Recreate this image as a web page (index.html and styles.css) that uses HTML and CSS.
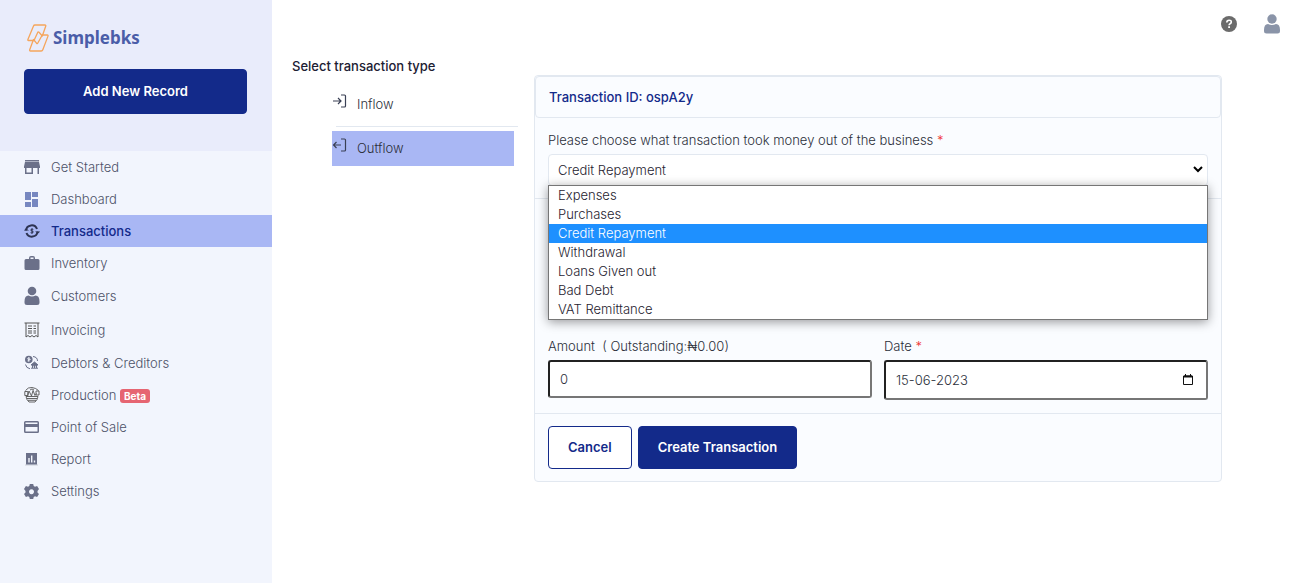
FILE: index.html
```
<!DOCTYPE html>
<html lang="en">
<head>
  <meta charset="utf-8">
  <title>Simplebks - Transactions</title>
  <link rel="stylesheet" href="styles.css">
</head>
<body>
  <aside class="sidebar">
    <div class="sidebar-top">
      <a class="logo" href="#">
        <svg width="22" height="28" viewBox="0 0 22 28" fill="none" stroke="#f5a55c" stroke-width="1.300" stroke-linejoin="round" stroke-linecap="round">
          <path d="M6.500 2q.4-1 1.400-1h10q1.200 0 .8 1.200L15.300 12l-3.300-3.800q-.8-.8-1.300.2L7 16.500H1.500q-1 0-.6-1z"/>
          <path d="M15.300 11h5q1.100 0 .7 1.100l-5.200 13.700q-.4 1.200-1.500 1.200H3.500q-1.200 0-.8-1.200L6.500 15.500l3 3.700q.8.800 1.300-.2z"/>
        </svg>
        <span>Simplebks</span>
      </a>
      <button class="btn btn-primary btn-block">Add New Record</button>
    </div>
    <nav class="nav">
      <a class="nav-link" href="#">
        <svg class="icon" viewBox="0 0 16 20" fill="currentColor"><path d="M1 3h14v1.500H1zM1 5h14l1 4.500V11h-1v6h-1.500v-6H9v6H1v-6H0V9.500zM2.500 11v4.500h5V11z"/></svg>
        Get Started
      </a>
      <a class="nav-link" href="#">
        <svg class="icon icon-blue" viewBox="0 0 16 20" fill="currentColor"><path d="M1 3h6v8H1zM8 3h6v5H8zM1 13h6v5H1zM8 10h6v8H8z"/></svg>
        Dashboard
      </a>
      <a class="nav-link active" href="#">
        <svg class="icon" viewBox="0 0 16 20" fill="none" stroke="currentColor"><g stroke-width="2"><path d="M2 9.500a5.700 5.700 0 0 1 11-1.500M13.500 10.500a5.700 5.700 0 0 1-11 1.500"/></g><path d="M-.3 9.500L2 7.500l3 2zM16.300 10.500L14 12.500l-3-2z" fill="currentColor" stroke="none"/><path d="M9.300 8.500Q8 7.600 7 8.500t1 1.500 1 1.500-2.400.2M8 7.300v5.400"/></svg>
        Transactions
      </a>
      <a class="nav-link" href="#">
        <svg class="icon" viewBox="0 0 16 20" fill="currentColor"><path d="M5 6V5q0-2 2-2h2q2 0 2 2v1h3q1.500 0 1.500 1.500v8q0 1.500-1.500 1.500H2Q.5 17 .5 15.500v-8Q.5 6 2 6zm1.500 0h3V4.500h-3z"/></svg>
        Inventory
      </a>
      <a class="nav-link" href="#">
        <svg class="icon icon-tall" viewBox="0 0 16 22" fill="currentColor"><circle cx="8" cy="6" r="4.300"/><path d="M.5 16.500q0-6 4-6 3.500 1.800 7 0 4 0 4 6v1q0 2.500-2.500 2.500H3q-2.500 0-2.500-2.500z"/></svg>
        Customers
      </a>
      <a class="nav-link" href="#">
        <svg class="icon icon-mid icon-dark" viewBox="0 0 16 21" fill="none" stroke="currentColor"><path d="M.5 4h15M2 4v14l2-1.500 2 1.500 2-1.500 2 1.500 2-1.500 2 1.500V4M4 7h4M9.500 7h2.500M4 9.500h4M9.500 9.500h2.500M4 12h4M9.500 12h2.500M4 14h4M9.500 14h2.500"/></svg>
        Invoicing
      </a>
      <a class="nav-link" href="#">
        <svg class="icon icon-mid" viewBox="0 0 16 21" fill="none" stroke="currentColor"><circle cx="4.800" cy="7.500" r="3.800" fill="currentColor" stroke="none"/><path d="M6 6.300q-2.500-.8-2.400.4t2.200.8-2.300 1.400M4.800 5v5" stroke="#f2f5fd" stroke-width=".8"/><path d="M9 4.500q4.500.5 4.500 4.500M1.500 12.500q.5 3.500 4.500 4.300"/><path d="M7 13l3.500-3 3.500 3zM8 13.800h5M7 16.200h7M8.500 13v3M10.500 13v3M12.500 13v3" fill="currentColor"/></svg>
        Debtors &amp; Creditors
      </a>
      <a class="nav-link" href="#">
        <svg class="icon icon-dark" viewBox="0 0 16 20" fill="none" stroke="currentColor" stroke-width=".9"><path d="M1.500 5.500Q4 2 8 2.500t6.500 3M.8 6.500h3v4h-3zM12 6h3v4h-3zM3.500 11.500L5 6l2.500 5L9 5.500l2 5 1.500-2M2 11.500h12q-.5 3.500-3 5.500H5q-2.500-2-3-5.500zM3 13.500h10M4 15.300h8M6 5q2-2 4 0"/></svg>
        <span>Production <span class="badge">Beta</span></span>
      </a>
      <a class="nav-link" href="#">
        <svg class="icon" viewBox="0 0 16 20" fill="currentColor"><path fill-rule="evenodd" d="M1.500 4h12q1.500 0 1.500 1.500v9q0 1.500-1.500 1.500h-12Q0 16 0 14.500v-9Q0 4 1.500 4zm0 1.500V7h12V5.500zm0 4.500v4.500h12V10z"/></svg>
        Point of Sale
      </a>
      <a class="nav-link" href="#">
        <svg class="icon" viewBox="0 0 16 20"><path fill="#dfe2ea" d="M1 15h13v2H1z"/><path fill="currentColor" fill-rule="evenodd" d="M2 4h11v11.500H2zm2.300 5v4.500h1.400V9zm2.700-2.500v7h1.400v-7zm2.800 5v2h1.400v-2z"/></svg>
        Report
      </a>
      <a class="nav-link" href="#">
        <svg class="icon" viewBox="0 0 16 20" fill="currentColor"><path fill-rule="evenodd" d="M5.800 3h3.400l.5 2 1.300.8 2.100-.7 1.900 3L13.500 10v1.500l1.500 1.400-1.900 3-2.100-.6-1.300.8-.5 2H5.800l-.5-2-1.300-.8-2.100.6-1.900-3 1.500-1.400V10L0 8.100l1.900-3 2.100.7L5.300 5zM7.500 8.200a2.500 2.500 0 1 0 .01 0z"/></svg>
        Settings
      </a>
    </nav>
  </aside>

  <div class="page">
    <header class="topbar">
      <a href="#" aria-label="Help">
        <svg width="16" height="16" viewBox="0 0 16 16"><circle cx="8" cy="8" r="8" fill="#6b6b6b"/><path d="M5.800 6.500q0-2.300 2.300-2.300t2.200 1.900q0 1.100-1.200 1.700-1 .5-1 1.400" fill="none" stroke="#fff" stroke-width="1.600"/><path d="M7.200 10.300h1.800V12H7.200z" fill="#fff"/></svg>
      </a>
      <a href="#" aria-label="Account">
        <svg width="16" height="20" viewBox="0 0 16 20" fill="#8a94a8"><circle cx="8" cy="5" r="4.700"/><path d="M0 16q0-6 4-6 4 2 8 0 4 0 4 6v1q0 2.500-2.500 2.500h-11Q0 19.500 0 17z"/></svg>
      </a>
    </header>

    <main class="content">
      <section class="types">
        <h2>Select transaction type</h2>
        <a class="type" href="#">
          <svg width="15" height="14" viewBox="0 0 15 14" fill="none" stroke="#3a4055" stroke-width="1.200"><path d="M1 7h8M6 4l3 3-3 3M9 1h3.500q1 0 1 1v10q0 1-1 1H9"/></svg>
          Inflow
        </a>
        <hr>
        <a class="type selected" href="#">
          <svg width="15" height="14" viewBox="0 0 15 14" fill="none" stroke="#3a4055" stroke-width="1.200"><path d="M1.500 7H9M4.500 4l-3 3 3 3M9 1h3.500q1 0 1 1v10q0 1-1 1H9"/></svg>
          Outflow
        </a>
      </section>

      <form class="card" onsubmit="return false">
        <div class="card-header">Transaction ID: ospA2y</div>
        <div class="card-section">
          <label for="category">Please choose what transaction took money out of the business <span class="required">*</span></label>
          <div class="select-wrap">
            <select id="category">
              <option>Expenses</option>
              <option>Purchases</option>
              <option selected>Credit Repayment</option>
              <option>Withdrawal</option>
              <option>Loans Given out</option>
              <option>Bad Debt</option>
              <option>VAT Remittance</option>
            </select>
            <svg class="chevron" width="10" height="7" viewBox="0 0 10 7" fill="none" stroke="#000" stroke-width="2"><path d="M1 1l4 4 4-4"/></svg>
            <ul class="options" id="options">
              <li>Expenses</li>
              <li>Purchases</li>
              <li class="current">Credit Repayment</li>
              <li>Withdrawal</li>
              <li>Loans Given out</li>
              <li>Bad Debt</li>
              <li>VAT Remittance</li>
            </ul>
          </div>
        </div>
        <div class="card-section details">
          <div class="field">
            <label for="amount">Amount &nbsp;( Outstanding:₦0.00)</label>
            <input type="text" id="amount" value="0">
          </div>
          <div class="field">
            <label for="date">Date <span class="required">*</span></label>
            <div class="date-wrap">
              <input type="text" id="date" class="date" value="15-06-2023">
              <svg class="calendar" width="10" height="11" viewBox="0 0 10 11" fill="none" stroke="#111"><path d="M.5 2h9v8.500h-9zM2.500 0v2M7.500 0v2"/><path d="M1 2.500h8" stroke-width="2"/></svg>
            </div>
          </div>
        </div>
        <div class="card-section actions">
          <button class="btn btn-outline" type="button">Cancel</button>
          <button class="btn btn-primary">Create Transaction</button>
        </div>
      </form>
    </main>
  </div>
</body>
</html>
```

FILE: styles.css
```
* {
  box-sizing: border-box;
}

body {
  display: flex;
  min-height: 100vh;
  margin: 0;
  background-color: #fff;
  color: #2b2f3a;
  font-family: Inter, "Open Sans", sans-serif;
  font-size: 13px;
  font-weight: 300;
  line-height: 20px;
}

a {
  color: inherit;
  text-decoration: none;
}

svg {
  flex: none;
}

/* Sidebar */
.sidebar {
  flex: none;
  width: 272px;
  background-color: #f2f5fd;
}

.sidebar-top {
  height: 151px;
  padding: 24px 25px 0 24px;
  background-color: #e9ecfb;
}

.logo {
  display: flex;
  align-items: center;
  gap: 4px;
  margin-bottom: 17px;
  padding-left: 3px;
  color: #4a5da8;
  font-family: "Noto Sans", sans-serif;
  font-size: 17px;
  font-weight: 700;
}

.nav-link {
  display: flex;
  align-items: center;
  gap: 11px;
  padding: 6px 24px;
  color: #4d5268;
}

.nav-link.active {
  background-color: #a9b7f4;
  color: #132a8a;
  font-weight: 500;
}

.icon {
  width: 16px;
  height: 20px;
  color: #6b7089;
}

.icon-mid {
  height: 21px;
}

.icon-tall {
  height: 22px;
}

.icon-blue {
  color: #7787c0;
}

.icon-dark {
  color: #555;
}

.active .icon {
  color: #2d3352;
}

.badge {
  display: inline-block;
  padding: 0 4px;
  border-radius: 3px;
  background-color: #e66572;
  color: #fff;
  font-size: 10px;
  font-weight: 700;
  line-height: 14px;
}

/* Buttons */
.btn {
  height: 43px;
  padding: 0 19px 1px;
  border: 1px solid #132a8a;
  border-radius: 4px;
  font-family: inherit;
  font-size: 13px;
  font-weight: 600;
  cursor: pointer;
}

.btn-primary {
  background-color: #132a8a;
  color: #fff;
}

.btn-outline {
  background-color: #fff;
  color: #132a8a;
}

.btn-block {
  width: 100%;
  height: 45px;
}

/* Main area */
.page {
  flex: 1;
  min-width: 0;
}

.topbar {
  display: flex;
  justify-content: flex-end;
  align-items: center;
  gap: 27px;
  height: 48px;
  padding-right: 12px;
}

.topbar svg {
  display: block;
}

.content {
  display: flex;
  align-items: flex-start;
  padding: 8px 70px 24px 20px;
}

.types {
  flex: none;
  width: 242px;
}

.types h2 {
  margin: 0 0 18px;
  color: #1c2033;
  font-size: 13px;
  font-weight: 500;
}

.type {
  display: flex;
  align-items: flex-start;
  gap: 10px;
  width: 182px;
  height: 32px;
  margin-left: 40px;
  line-height: 20px;
}

.types hr {
  width: 182px;
  margin: 0 0 4px 44px;
  border: 0;
  border-top: 1px solid #e2e8f0;
}

.type.selected {
  height: 35px;
  padding-top: 7px;
  background-color: #a9b7f4;
}

/* Card */
.card {
  flex: 1;
  min-width: 0;
  margin-top: 19px;
  border: 1px solid #e2e8f0;
  border-radius: 4px;
  background-color: #fafcff;
}

.card-header {
  padding: 10px 13px;
  border: 1px solid #e2e8f0;
  border-radius: 4px;
  color: #132a8a;
  font-weight: 500;
}

.card-section {
  padding: 12px 13px;
}

.card-section + .card-section {
  border-top: 1px solid #e2e8f0;
}

label {
  display: block;
  margin-bottom: 4px;
}

.required {
  color: #f03030;
}

.select-wrap,
.date-wrap {
  position: relative;
}

select {
  display: block;
  width: 100%;
  height: 32px;
  padding: 0 9px;
  appearance: none;
  border: 1px solid #e2e8f0;
  border-radius: 4px;
  background-color: #fff;
  color: #1f2330;
  font: inherit;
}

.chevron {
  position: absolute;
  top: 12px;
  right: 5px;
}

.options {
  position: absolute;
  top: 31px;
  left: 0;
  right: 0;
  z-index: 10;
  margin: 0;
  padding: 0;
  border: 1px solid #767676;
  background-color: #fff;
  box-shadow: 0 2px 10px rgba(0, 0, 0, 0.4);
  color: #1f2330;
  line-height: 19px;
  list-style: none;
}

.options li {
  padding: 0 9px;
}

.options .current {
  background-color: #1e90ff;
  color: #fff;
}

.details {
  display: grid;
  grid-template-columns: 1fr 1fr;
  gap: 12px;
  padding-top: 137px;
  padding-bottom: 13px;
}

input {
  display: block;
  width: 100%;
  height: 38px;
  padding: 0 10px;
  border: 2px inset #767676;
  border-radius: 3px;
  background-color: #fff;
  color: #2b2f3a;
  font: inherit;
}

input.date {
  height: 40px;
}

.calendar {
  position: absolute;
  top: 14px;
  right: 15px;
}

.actions {
  display: flex;
  gap: 6px;
}
```
